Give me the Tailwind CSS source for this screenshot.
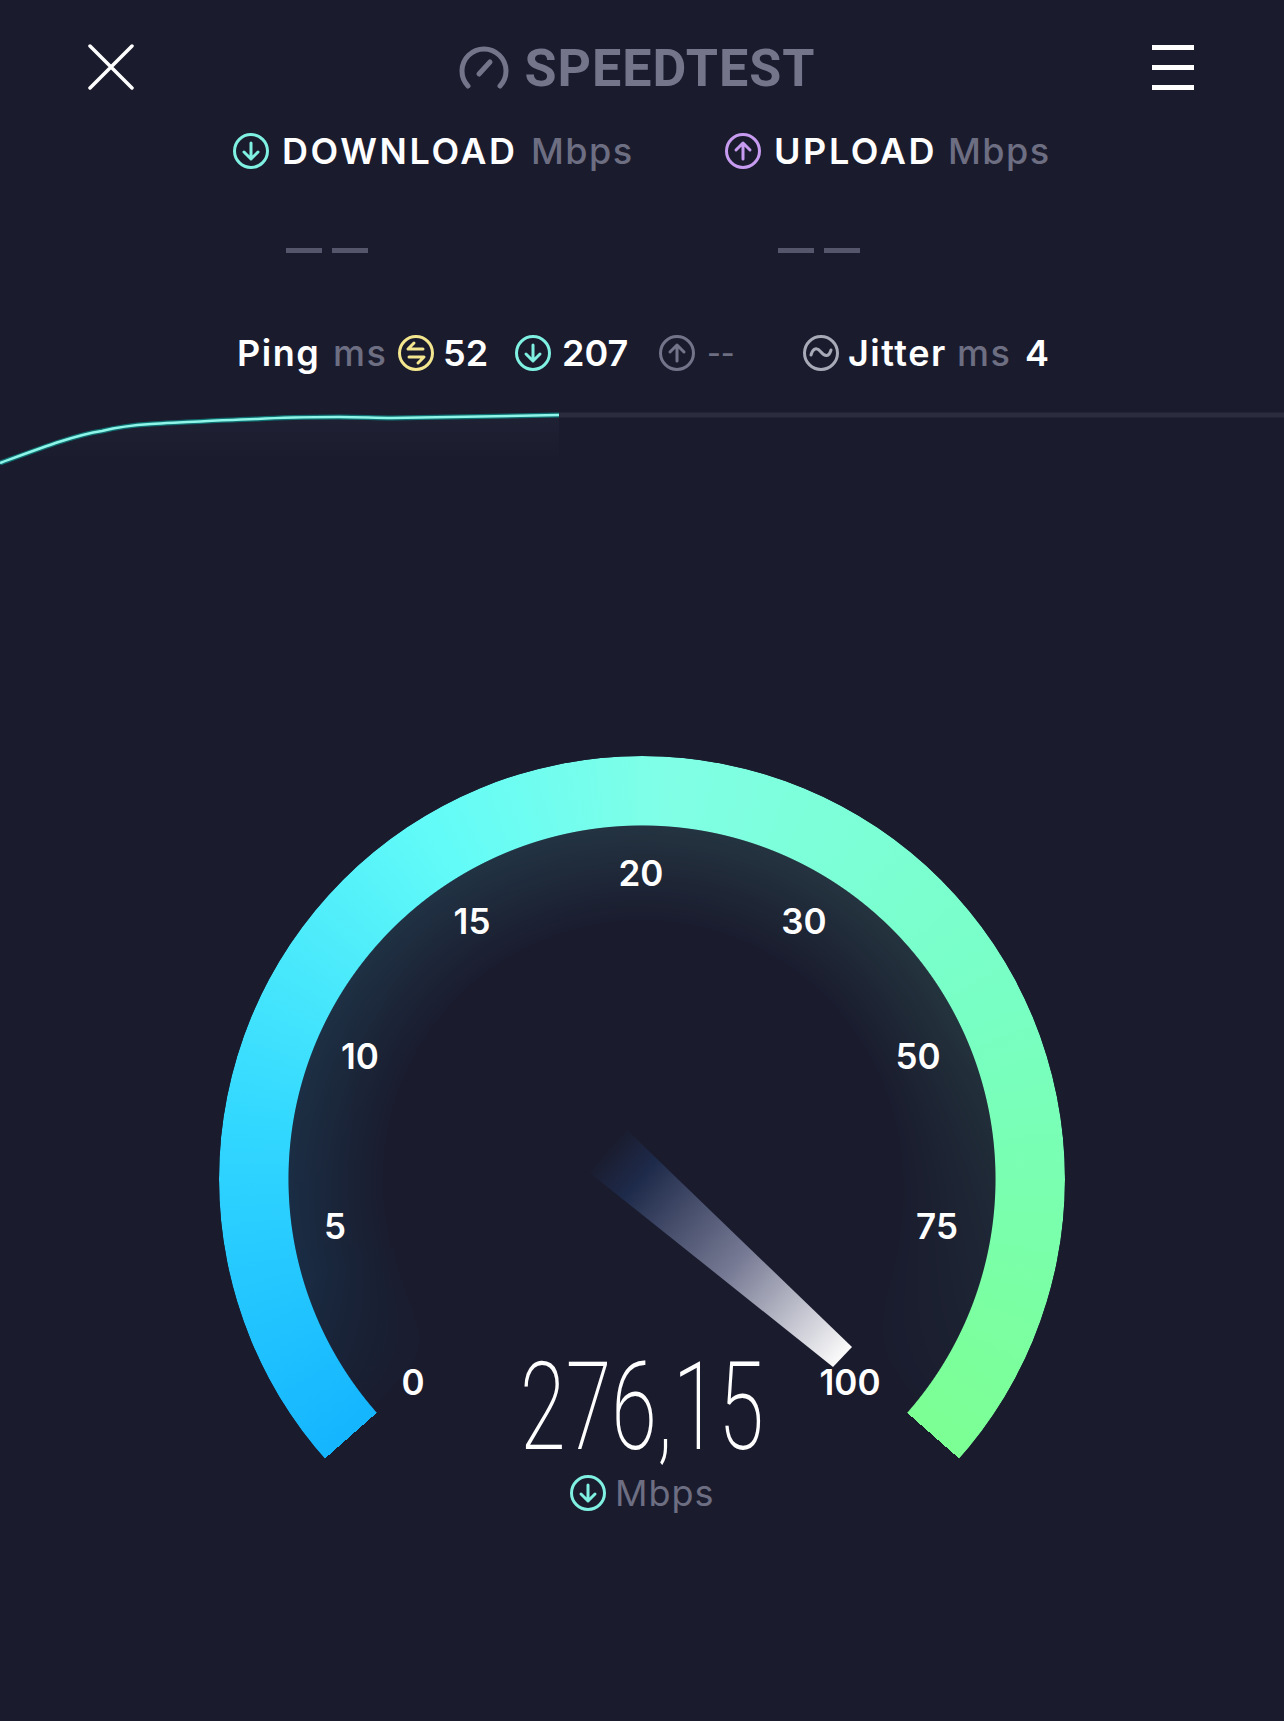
<!DOCTYPE html>
<html lang="en">
<head>
    <meta charset="UTF-8">
    <meta name="viewport" content="width=device-width, initial-scale=1.0">
    <title>Speedtest</title>
    <script src="https://cdn.jsdelivr.net/npm/@tailwindcss/browser@4"></script>
</head>
<body class="bg-[#1a1c2e] font-['Inter','Liberation_Sans',sans-serif] text-white">
<div class="relative w-[1284px] h-[1721px] overflow-hidden">
    <!-- top bar -->
    <header class="flex items-center h-[134px] pl-[88px] pr-[90px] justify-between">
        <svg class="w-[46px] h-[46px]" viewBox="0 0 46 46" fill="none" stroke="#fff" stroke-width="3.5" stroke-linecap="round"><path d="M2 2L44 44M44 2L2 44"/></svg>
        <div class="flex items-center gap-[16px] -ml-[12px]">
            <svg class="w-[50px] h-[44px]" viewBox="0 0 50 44" fill="none" stroke="#74758a" stroke-width="5" stroke-linecap="round"><path d="M9 41A22 22 0 1 1 41 41"/><path d="M20 29L31 17"/></svg>
            <span class="mt-[3px] font-['Roboto'] font-bold text-[52px] leading-none text-[#74758a] tracking-[1px]">SPEEDTEST</span>
        </div>
        <div class="flex flex-col gap-[15px] w-[42px]">
            <div class="h-[5px] bg-white"></div>
            <div class="h-[5px] bg-white"></div>
            <div class="h-[5px] bg-white"></div>
        </div>
    </header>

    <!-- download / upload -->
    <div class="flex items-center h-[34px] pl-[233px] text-[36px] font-semibold tracking-[2.6px]">
        <svg class="w-[36px] h-[36px] shrink-0" viewBox="0 0 36 36" fill="none" stroke="#7ff0e2" stroke-width="3" stroke-linecap="round" stroke-linejoin="round"><circle cx="18" cy="18" r="16.5"/><path d="M18 10V26M11 19L18 26L25 19"/></svg>
        <span class="ml-[13px] w-[249px]">DOWNLOAD</span>
        <span class="w-[194px] text-[#6d6e82] font-medium tracking-[1.5px]">Mbps</span>
        <svg class="w-[36px] h-[36px] shrink-0" viewBox="0 0 36 36" fill="none" stroke="#c79cf0" stroke-width="3" stroke-linecap="round" stroke-linejoin="round"><circle cx="18" cy="18" r="16.5"/><path d="M18 26V10M11 17L18 10L25 17"/></svg>
        <span class="ml-[13px] w-[174px]">UPLOAD</span>
        <span class="text-[#6d6e82] font-medium tracking-[1.5px]">Mbps</span>
    </div>

    <!-- empty values -->
    <div class="flex items-center mt-[80px] pl-[286px] gap-[10px]">
        <div class="w-[36px] h-[5px] bg-[#55566b]"></div>
        <div class="w-[36px] h-[5px] bg-[#55566b]"></div>
        <div class="w-[36px] h-[5px] bg-[#55566b] ml-[400px]"></div>
        <div class="w-[36px] h-[5px] bg-[#55566b]"></div>
    </div>

    <!-- ping / jitter -->
    <div class="flex items-center h-[40px] mt-[80px] pl-[237px] text-[36px] font-semibold tracking-[1.5px]">
        <span class="w-[96px]">Ping</span>
        <span class="w-[65px] text-[#6d6e82] font-medium">ms</span>
        <svg class="w-[36px] h-[36px] shrink-0" viewBox="0 0 36 36" fill="none" stroke="#f3e68e" stroke-width="3" stroke-linecap="round" stroke-linejoin="round"><circle cx="18" cy="18" r="16.5"/><path d="M25 14H10L16 8M11 22H26L20 28"/></svg>
        <span class="ml-[9px] w-[72px] tracking-[0px]">52</span>
        <svg class="w-[36px] h-[36px] shrink-0" viewBox="0 0 36 36" fill="none" stroke="#7ff0e2" stroke-width="3" stroke-linecap="round" stroke-linejoin="round"><circle cx="18" cy="18" r="16.5"/><path d="M18 10V26M11 19L18 26L25 19"/></svg>
        <span class="ml-[11px] w-[97px] tracking-[0px]">207</span>
        <svg class="w-[36px] h-[36px] shrink-0" viewBox="0 0 36 36" fill="none" stroke="#73748a" stroke-width="3" stroke-linecap="round" stroke-linejoin="round"><circle cx="18" cy="18" r="16.5"/><path d="M18 26V10M11 17L18 10L25 17"/></svg>
        <span class="ml-[12px] w-[96px] text-[30px] text-[#6d6e82] font-medium tracking-[0px]">--</span>
        <svg class="w-[36px] h-[36px] shrink-0" viewBox="0 0 36 36" fill="none" stroke="#a9aab8" stroke-width="3" stroke-linecap="round" stroke-linejoin="round"><circle cx="18" cy="18" r="16.5"/><path d="M8 20C10 13 14 12 18 17C22 22 26 22 28 15"/></svg>
        <span class="ml-[9px] w-[109px]">Jitter</span>
        <span class="w-[68px] text-[#6d6e82] font-medium">ms</span>
        <span>4</span>
    </div>

    <!-- progress graph -->
    <div class="relative h-[70px] mt-[23px]">
        <svg class="w-full h-full" viewBox="0 0 1284 70" fill="none">
            <defs>
                <linearGradient id="graphFill" x1="0" y1="0" x2="0" y2="1">
                    <stop offset="0" stop-color="#2a2c40"/>
                    <stop offset="1" stop-color="#1a1c2e"/>
                </linearGradient>
            </defs>
            <path d="M0 67C41 52 75 39 102 35C118 31 135 29 151 28C190 26 225 24 257 23C290 21 315 21 339 21C360 21 375 22 392 22C450 21 505 20 559 19V60H0Z" fill="url(#graphFill)" opacity="0.3"/>
            <path d="M559 19H1284" stroke="#2b2c3e" stroke-width="5"/>
            <path d="M0 67C41 52 75 39 102 35C118 31 135 29 151 28C190 26 225 24 257 23C290 21 315 21 339 21C360 21 375 22 392 22C450 21 505 20 559 19" stroke="#0f6f70" stroke-width="5"/>
            <path d="M0 67C41 52 75 39 102 35C118 31 135 29 151 28C190 26 225 24 257 23C290 21 315 21 339 21C360 21 375 22 392 22C450 21 505 20 559 19" stroke="#8ff5e8" stroke-width="2.5"/>
        </svg>
    </div>

    <!-- gauge: items sit on a free canvas, centre at 642,1179 -->
    <div class="absolute left-[219px] top-[756px] w-[846px] h-[846px]">
        <div class="absolute inset-0 rounded-full bg-[conic-gradient(from_228.6deg,#15b5ff_0deg,#33d8ff_50deg,#62fbf8_100deg,#80ffe6_135deg,#78ffc4_195deg,#7cff93_262.8deg,transparent_262.8deg)] [mask-image:radial-gradient(circle,transparent_353px,black_354px)]"></div>
        <div class="absolute inset-0 rounded-full opacity-[0.1] bg-[conic-gradient(from_228.6deg,#15b5ff00_0deg,#15b5ff_25deg,#5ef6ff_100deg,#80ffe6_135deg,#78ffc4_195deg,#7cff9300_262.8deg,transparent_262.8deg)] [mask-image:radial-gradient(circle,transparent_255px,black_353px,transparent_353.5px)]"></div>

        <svg class="absolute left-0 top-0 w-[846px] h-[846px]" viewBox="219 756 846 846" fill="none">
            <defs>
                <linearGradient id="needle" gradientUnits="userSpaceOnUse" x1="606" y1="1150" x2="843" y2="1357">
                    <stop offset="0" stop-color="#1a1c2e"/>
                    <stop offset="0.14" stop-color="#1e2a4a"/>
                    <stop offset="0.55" stop-color="#777a94"/>
                    <stop offset="1" stop-color="#fbfbfb"/>
                </linearGradient>
            </defs>
            <polygon points="627,1130 852,1347 833,1367 590,1173" fill="url(#needle)"/>
        </svg>

        <span class="absolute left-[194px] top-[626px] -translate-x-1/2 -translate-y-1/2 text-[35px] font-semibold">0</span>
        <span class="absolute left-[116px] top-[470px] -translate-x-1/2 -translate-y-1/2 text-[35px] font-semibold">5</span>
        <span class="absolute left-[141px] top-[300px] -translate-x-1/2 -translate-y-1/2 text-[35px] font-semibold">10</span>
        <span class="absolute left-[253px] top-[165px] -translate-x-1/2 -translate-y-1/2 text-[35px] font-semibold">15</span>
        <span class="absolute left-[422px] top-[117px] -translate-x-1/2 -translate-y-1/2 text-[35px] font-semibold">20</span>
        <span class="absolute left-[585px] top-[165px] -translate-x-1/2 -translate-y-1/2 text-[35px] font-semibold">30</span>
        <span class="absolute left-[699px] top-[300px] -translate-x-1/2 -translate-y-1/2 text-[35px] font-semibold">50</span>
        <span class="absolute left-[718px] top-[470px] -translate-x-1/2 -translate-y-1/2 text-[35px] font-semibold">75</span>
        <span class="absolute left-[631px] top-[626px] -translate-x-1/2 -translate-y-1/2 text-[35px] font-semibold">100</span>

        <div class="absolute left-[423px] top-[590px] -translate-x-1/2 font-['Roboto'] font-extralight text-[122px] leading-[124px] whitespace-nowrap scale-x-[0.68]">276,15</div>
        <div class="absolute left-[351px] top-[719px] flex items-center gap-[9px] text-[#6d6e82] text-[36px] font-normal leading-[36px] tracking-[1px]">
            <svg class="w-[36px] h-[36px] shrink-0" viewBox="0 0 36 36" fill="none" stroke="#7ff0e2" stroke-width="3" stroke-linecap="round" stroke-linejoin="round"><circle cx="18" cy="18" r="16.5"/><path d="M18 10V26M11 19L18 26L25 19"/></svg>
            <span>Mbps</span>
        </div>
    </div>
</div>
</body>
</html>
